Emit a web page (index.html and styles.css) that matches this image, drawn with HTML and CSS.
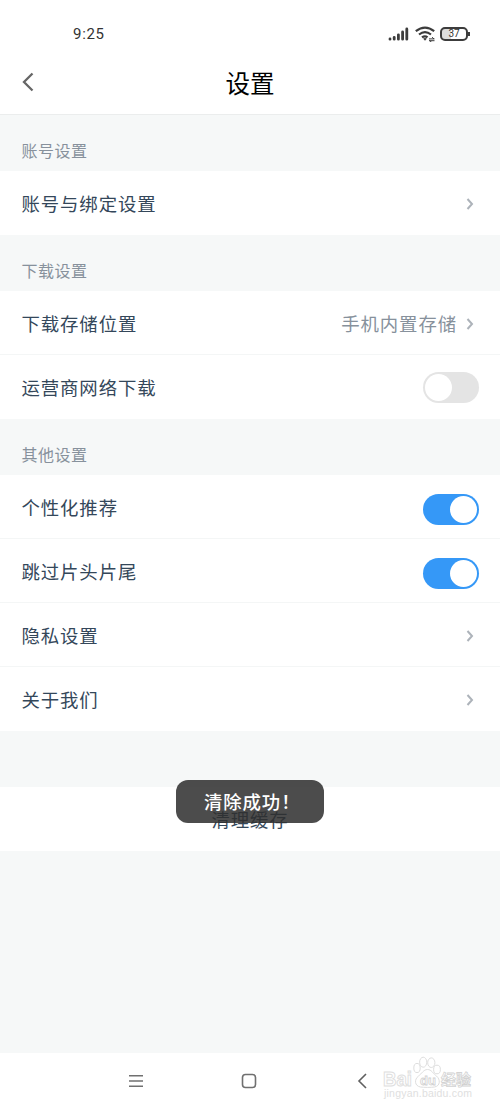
FILE: index.html
```
<!DOCTYPE html>
<html lang="zh-CN">
<head>
  <meta charset="UTF-8">
  <meta name="viewport" content="width=device-width, initial-scale=1.0">
  <title>设置</title>
  <link rel="stylesheet" href="styles.css">
</head>
<body>
  <div class="statusbar">
    <span class="time">9:25</span>
    <div class="status-icons">
      <svg width="22" height="14" viewBox="0 0 22 14" stroke="#3c3c3c" stroke-width="2.8" stroke-linecap="round">
        <path d="M2 12v.2M6.2 10.3v1.9M10.4 7.8v4.400M14.6 5v7.200M18.8 2v10.200"/>
      </svg>
      <svg class="wifi" width="20" height="16" viewBox="0 0 20 16" fill="none" stroke="#3c3c3c" stroke-width="2.2">
        <path d="M.8 5.2Q10 -2 19.200 5.2M4 8.500Q10 3.800 16 8.500M7 11.4Q10 9.200 12.500 11.400"/>
        <path d="M8.1 12.6L10 14.8l1.9-2.2Q10 11.4 8.1 12.6z" fill="#3c3c3c" stroke="none"/>
        <path d="M14 12.900h5.500M17 11.200l2 1.700M14 14.700h5.500M14.500 14.700l2 1.300" stroke-width="1"/>
      </svg>
      <span class="battery">37</span>
    </div>
  </div>

  <header>
    <svg class="back" width="14" height="20" viewBox="0 0 14 20" fill="none" stroke="#666" stroke-width="2.3">
      <path d="M12.5 1.5L4 10l8.500 8.500"/>
    </svg>
    <h1>设置</h1>
  </header>

  <main>
    <h2>账号设置</h2>
    <div class="group">
      <div class="row"><span>账号与绑定设置</span><svg class="arrow" viewBox="0 0 8 12"><path d="M1.500 1L6 6l-4.500 5"/></svg></div>
    </div>

    <h2>下载设置</h2>
    <div class="group">
      <div class="row">
        <span>下载存储位置</span>
        <span class="value">手机内置存储</span>
        <svg class="arrow" viewBox="0 0 8 12"><path d="M1.500 1L6 6l-4.500 5"/></svg>
      </div>
      <div class="row"><span>运营商网络下载</span><i class="switch"></i></div>
    </div>

    <h2>其他设置</h2>
    <div class="group">
      <div class="row"><span>个性化推荐</span><i class="switch on"></i></div>
      <div class="row"><span>跳过片头片尾</span><i class="switch on"></i></div>
      <div class="row"><span>隐私设置</span><svg class="arrow" viewBox="0 0 8 12"><path d="M1.500 1L6 6l-4.500 5"/></svg></div>
      <div class="row"><span>关于我们</span><svg class="arrow" viewBox="0 0 8 12"><path d="M1.500 1L6 6l-4.500 5"/></svg></div>
    </div>

    <div class="clear">
      <span>清理缓存</span>
      <div class="toast">清除成功！</div>
    </div>
  </main>

  <nav>
    <svg width="16" height="16" viewBox="0 0 16 16" fill="none" stroke="#707070" stroke-width="1.5"><path d="M1 2.700h14M1 8h14M1 13.300h14"/></svg>
    <svg width="16" height="16" viewBox="0 0 16 16" fill="none" stroke="#707070" stroke-width="1.600"><rect x="1.500" y="1.500" width="13" height="13" rx="3"/></svg>
    <svg width="16" height="16" viewBox="0 0 16 16" fill="none" stroke="#606060" stroke-width="1.600"><path d="M12 1L5 8l7 7"/></svg>
    <svg class="mark" width="100" height="46" viewBox="0 0 100 46">
      <g fill="#fff" stroke="#dedede">
        <ellipse cx="36" cy="13" rx="3.200" ry="4.600"/>
        <ellipse cx="42.200" cy="7.200" rx="3.600" ry="5"/>
        <ellipse cx="50.300" cy="7.700" rx="3.600" ry="4.800"/>
        <ellipse cx="56" cy="14.500" rx="3.400" ry="4.300"/>
        <path d="M46.500 14.500c-4 0-5.500 4-9 6.500-4.500 3.500-4 10 2 11 3 .5 11 .5 14 0 6-1 6-7.500 2-11-3.500-2.500-5-6.500-9-6.500z"/>
      </g>
      <text class="mark-name" x="2" y="31" textLength="29" lengthAdjust="spacingAndGlyphs">Bai</text>
      <text class="mark-du" x="39" y="29.500">du</text>
      <text class="mark-cn" x="60" y="29.500">经验</text>
      <text class="mark-url" x="3" y="42" textLength="88">jingyan.baidu.com</text>
    </svg>
  </nav>
</body>
</html>
```
FILE: styles.css
```
* {
  box-sizing: border-box;
}

body {
  margin: 0;
  height: 1111px;
  display: flex;
  flex-direction: column;
  background: #fff;
  color: #34475a;
  font-family: "Noto Sans CJK SC", sans-serif;
  overflow: hidden;
}

.statusbar {
  height: 52px;
  padding: 15px 32px 0 73px;
  display: flex;
  justify-content: space-between;
  align-items: center;
}

.time {
  font-family: Roboto, sans-serif;
  font-size: 15px;
  letter-spacing: 0.7px;
  color: #333;
}

.status-icons {
  display: flex;
  align-items: center;
  gap: 5px;
}

.battery {
  position: relative;
  width: 28px;
  height: 14px;
  border: 2px solid #3c3c3c;
  border-radius: 5px;
  background: linear-gradient(90deg, #ddd 37%, #fff 37%);
  font: 10px/10px Roboto, sans-serif;
  text-align: center;
  color: #333;
}

.battery::after {
  content: "";
  position: absolute;
  right: -4px;
  top: 3px;
  width: 2px;
  height: 4px;
  background: #3c3c3c;
}

header {
  height: 63px;
  padding: 0 20px;
  display: grid;
  grid-template-columns: 14px 1fr 14px;
  align-items: center;
  border-bottom: 1px solid #ebeded;
}

.back {
  margin-bottom: 2px;
}

h1 {
  margin: 0;
  text-align: center;
  font-size: 24.5px;
  font-weight: 400;
  line-height: 62px;
  color: #000;
}

main {
  flex: 1;
  background: #f6f8f8;
}

h2 {
  margin: 0;
  height: 56px;
  padding: 16px 21.5px 0;
  font-size: 16px;
  font-weight: 400;
  line-height: 38px;
  letter-spacing: 0.5px;
  color: #87919c;
}

.group {
  background: #fff;
}

.row {
  height: 64px;
  padding: 0 21px 0 21.5px;
  display: flex;
  align-items: center;
  justify-content: space-between;
  border-bottom: 1px solid #f4f6f6;
  font-size: 18.4px;
  letter-spacing: 0.9px;
}

.row:last-child {
  border-bottom-color: transparent;
}

.value {
  margin-left: auto;
  margin-right: 9px;
  color: #87919c;
}

.arrow {
  width: 8px;
  height: 12px;
  margin-top: 2px;
  margin-right: 5px;
  fill: none;
  stroke: #adb3ba;
  stroke-width: 2;
}

.switch {
  width: 56px;
  height: 31px;
  margin-top: 1px;
  padding: 2px;
  border-radius: 16px;
  background: #e4e4e4;
}

.switch::before {
  content: "";
  display: block;
  width: 27px;
  height: 27px;
  border-radius: 50%;
  background: #fff;
}

.switch.on {
  margin-top: 5px;
  background: #3598f7;
}

.switch.on::before {
  margin-left: auto;
}

.clear {
  position: relative;
  height: 64px;
  margin-top: 56px;
  background: #fff;
  text-align: center;
  font-size: 18.4px;
  line-height: 64px;
  letter-spacing: 0.9px;
}

.toast {
  position: absolute;
  left: 176px;
  top: -7px;
  width: 148px;
  height: 43px;
  padding-left: 28px;
  border-radius: 12px;
  background: rgba(47, 47, 47, 0.86);
  color: #fff;
  font-weight: 500;
  line-height: 43px;
  text-align: left;
  white-space: nowrap;
}

nav {
  position: relative;
  height: 58px;
  padding: 0 130px 2px 128px;
  display: flex;
  justify-content: space-between;
  align-items: center;
}

.mark {
  position: absolute;
  left: 381px;
  top: 2px;
  font-family: "Liberation Sans", sans-serif;
}

.mark-name {
  font-size: 20px;
  font-weight: bold;
  fill: #fff;
  stroke: #dedede;
}

.mark-du {
  font-size: 13px;
  font-weight: bold;
  fill: #fff;
  stroke: #d2d2d2;
  stroke-width: 0.8;
}

.mark-cn {
  font-family: "Noto Sans CJK SC", sans-serif;
  font-size: 15px;
  font-weight: bold;
  fill: #fff;
  stroke: #d2d2d2;
  stroke-width: 0.8;
}

.mark-url {
  font-size: 10.5px;
  fill: #e0e0e0;
}
```
